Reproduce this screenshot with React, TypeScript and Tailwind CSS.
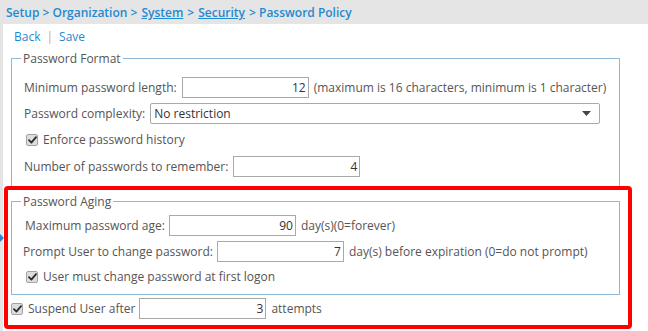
import React from "react";

const Check = () => (
  <span className="inline-flex items-center justify-center w-[12px] h-[12px] rounded-[2px] border border-[#a3a3a3] bg-[#dedede] shrink-0">
    <svg width="9" height="8" viewBox="0 0 9 8">
      <path d="M1 4.2 L3.4 6.6 L8 1.2" stroke="#2b2b2b" strokeWidth="1.8" fill="none" strokeLinecap="round" strokeLinejoin="round" />
    </svg>
  </span>
);

const Num = ({ v, className = "" }: { v: string; className?: string }) => (
  <div className={"w-[127px] h-[21px] shrink-0 border border-[#a9a9a9] bg-white flex items-center justify-end pr-[2px] text-[#333] " + className}>
    {v}
  </div>
);

export default function App() {
  return (
    <div
      className="w-[648px] h-[331px] bg-[#e5e5e5] relative overflow-hidden text-[12px] text-[#555] whitespace-nowrap"
      style={{ fontFamily: '"Open Sans", sans-serif' }}
    >
      <div className="h-[24px] pl-[6px] flex items-center text-[12px] font-semibold text-[#1f8ad2] leading-none pt-[2px]">
        <span>Setup &gt; Organization &gt;</span>
        <span className="underline ml-[4px]">System</span>
        <span className="ml-[4px]">&gt;</span>
        <span className="underline ml-[4px]">Security</span>
        <span className="ml-[4px]">&gt; Password Policy</span>
      </div>
      <div className="ml-[3px] bg-white h-[307px] relative">
        <div className="h-[26px] pl-[11px] flex items-center text-[#1f8ad2] text-[12px]">
          <span>Back</span>
          <span className="mx-[6px] text-[#d6a57c]">|</span>
          <span>Save</span>
        </div>
        <fieldset className="ml-[8px] w-[609px] border border-[#8fb8d6] px-[12px] pb-[10px] pt-[10px] h-[138px]">
          <legend className="px-[2px] -ml-[3px] leading-[17px]">Password Format</legend>
          <div className="flex flex-col gap-[5px]">
            <div className="flex items-center h-[21px]">
              <span>Minimum password length:</span>
              <Num v="12" className="ml-[5px]" />
              <span className="ml-[5px]">(maximum is 16 characters, minimum is 1 character)</span>
            </div>
            <div className="flex items-center h-[21px]">
              <span>Password complexity:</span>
              <div className="ml-[5px] w-[450px] h-[21px] shrink-0 border border-[#a9a9a9] rounded-[2px] flex items-center pl-[3px] pr-[8px] justify-between text-[#333]">
                <span>No restriction</span>
                <svg width="9" height="5" viewBox="0 0 9 5">
                  <path d="M0 0 H9 L4.5 5 Z" fill="#444" />
                </svg>
              </div>
            </div>
            <div className="flex items-center h-[22px] pl-[2px]">
              <Check />
              <span className="ml-[5px]">Enforce password history</span>
            </div>
            <div className="flex items-center h-[21px]">
              <span>Number of passwords to remember:</span>
              <Num v="4" className="ml-[5px]" />
            </div>
          </div>
        </fieldset>
        <div className="relative z-10 -mt-[2px] ml-[1px] w-[628px] h-[143px] border-[4px] border-[#ff0000] rounded-[4px] pl-[3px] pt-[3px]">
          <fieldset className="w-[609px] border border-[#8fb8d6] pl-[11px] pt-[5px] h-[102px]">
            <legend className="px-[2px] -ml-[2px] leading-[17px]">Password Aging</legend>
            <div className="flex flex-col">
              <div className="flex items-center h-[21px] pl-[2px]">
                <span>Maximum password age:</span>
                <Num v="90" className="ml-[4px] h-[20px]" />
                <span className="ml-[5px]">day(s)(0=forever)</span>
              </div>
              <div className="flex items-center h-[21px] mt-[5px]">
                <span>Prompt User to change password:</span>
                <Num v="7" className="ml-[4px]" />
                <span className="ml-[5px]">day(s) before expiration (0=do not prompt)</span>
              </div>
              <div className="flex items-center h-[22px] mt-[4px] pl-[3px]">
                <Check />
                <span className="ml-[5px]">User must change password at first logon</span>
              </div>
            </div>
          </fieldset>
          <div className="flex items-center h-[21px] mt-[3px]">
            <Check />
            <span className="ml-[5px]">Suspend User after</span>
            <Num v="3" className="ml-[4px] h-[20px]" />
            <span className="ml-[5px]">attempts</span>
          </div>
        </div>
      </div>
      <div className="absolute left-0 top-[234px] w-0 h-0 border-y-[4px] border-y-transparent border-l-[4px] border-l-[#1f8ad2]" />
    </div>
  );
}
